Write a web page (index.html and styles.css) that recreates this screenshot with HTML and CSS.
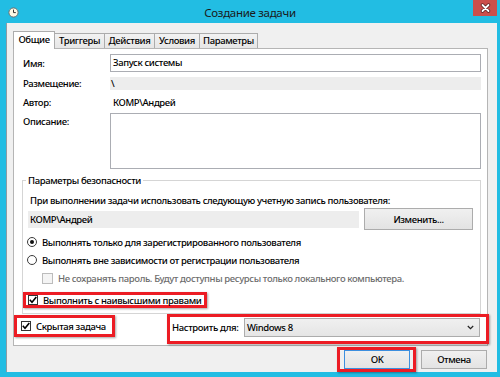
FILE: index.html
```html
<!DOCTYPE html>
<html lang="ru">
  <head>
    <meta charset="utf-8">
    <title>Создание задачи</title>
    <link rel="stylesheet" href="styles.css">
  </head>
  <body>
    <div class="Window">
      <div class="TitleBar">
        <span class="TitleIcon">
          <svg width="11" height="11" viewBox="0 0 11 11">
            <circle cx="5.5" cy="5.5" r="4.6" fill="#fdf8e4" stroke="#6f6f6f" stroke-width="1"/>
            <path d="M5.5 2.6 V5.6 H7.8" fill="none" stroke="#333" stroke-width="1"/>
          </svg>
        </span>
        <span class="TitleText">Создание задачи</span>
        <span class="CloseBtn">
          <svg width="11" height="10" viewBox="0 0 11 10">
            <path d="M2.5 2 L8.5 8 M8.5 2 L2.5 8" stroke="#5a2020" stroke-width="3.4" stroke-linecap="round"/>
            <path d="M2.5 2 L8.5 8 M8.5 2 L2.5 8" stroke="#fff" stroke-width="1.8" stroke-linecap="round"/>
          </svg>
        </span>
      </div>

      <div class="Client">
        <div class="Tabs">
          <span class="Tab Active TabGeneral">Общие</span>
          <span class="Tab TabWide">Триггеры</span>
          <span class="Tab TabWide">Действия</span>
          <span class="Tab TabCond">Условия</span>
          <span class="Tab TabParams">Параметры</span>
        </div>

        <div class="Panel">
          <div class="InfoGrid">
            <span class="Label">Имя:</span>
            <div class="Input">Запуск системы</div>
            <span class="Label Row2">Размещение:</span>
            <div class="ReadOnly Row2">\</div>
            <span class="Label AuthorRow">Автор:</span>
            <span class="Value AuthorRow">КОМР\Андрей</span>
            <span class="Label DescLabel">Описание:</span>
            <div class="TextArea"></div>
          </div>

          <fieldset class="Group">
            <legend>Параметры безопасности</legend>
            <div class="GroupText">При выполнении задачи использовать следующую учетную запись пользователя:</div>
            <div class="AccountRow">
              <div class="AccountField">КОМР\Андрей</div>
              <span class="Button ChangeBtn">Изменить...</span>
            </div>
            <div class="Option FirstOption"><span class="Radio On"></span>Выполнять только для зарегистрированного пользователя</div>
            <div class="Option"><span class="Radio"></span>Выполнять вне зависимости от регистрации пользователя</div>
            <div class="Option SubOption Disabled"><span class="Check Off"></span>Не сохранять пароль. Будут доступны ресурсы только локального компьютера.</div>
            <div class="Mark MarkRun">
              <span class="Check">
                <svg width="8" height="8" viewBox="0 0 8 8"><path d="M0.8 3.8 L3 6.2 L7.3 1" fill="none" stroke="#000" stroke-width="1.6"/></svg>
              </span>Выполнить с наивысшими правами
            </div>
          </fieldset>

          <div class="BottomRow">
            <div class="Mark MarkHidden">
              <span class="Check">
                <svg width="8" height="8" viewBox="0 0 8 8"><path d="M0.8 3.8 L3 6.2 L7.3 1" fill="none" stroke="#000" stroke-width="1.6"/></svg>
              </span>Скрытая задача
            </div>
            <div class="Mark MarkConfig">
              <span class="ConfigLabel">Настроить для:</span>
              <div class="Select">
                <span>Windows 8</span>
                <svg width="7" height="5" viewBox="0 0 7 5"><path d="M0.8 1 L3.5 3.7 L6.2 1" fill="none" stroke="#222" stroke-width="1.2"/></svg>
              </div>
            </div>
          </div>
        </div>

        <div class="Buttons">
          <div class="Mark MarkOk"><span class="Button Default">OK</span></div>
          <span class="Button CancelBtn">Отмена</span>
        </div>
      </div>
    </div>
  </body>
</html>
```

FILE: styles.css
```css
* {
  margin: 0;
  padding: 0;
  box-sizing: border-box;
}

body {
  width: 500px;
  height: 377px;
  overflow: hidden;
  background: #22bde3;
  font-family: "Noto Sans", "Open Sans", sans-serif;
  font-size: 9.5px;
  font-weight: 500;
  letter-spacing: -0.38px;
  color: #000;
}

.Window {
  display: flex;
  flex-direction: column;
  height: 377px;
}

/* title bar */

.TitleBar {
  height: 23px;
  display: grid;
  grid-template-columns: 1fr auto 1fr;
}

.TitleIcon {
  padding: 7px 0 0 8px;
}

.TitleIcon svg {
  display: block;
}

.TitleText {
  padding-top: 2px;
  font-size: 11.5px;
  font-weight: 400;
  letter-spacing: -0.3px;
  line-height: 22px;
  color: #1a1a1a;
}

.CloseBtn {
  justify-self: end;
  width: 24px;
  height: 16px;
  margin-right: 3px;
  background: #cb4f4b;
  display: flex;
  align-items: center;
  justify-content: center;
}

/* dialog body */

.Client {
  flex: 1;
  margin: 0 3px 5px 6px;
  padding: 8px 9px 0 6px;
  background: #f0f0f0;
  border-left: 1px solid #8e9ba3;
}

.Tabs {
  display: flex;
  align-items: flex-end;
  height: 17px;
}

.Tab {
  height: 15px;
  margin-left: -1px;
  border: 1px solid #acacac;
  border-bottom: 0;
  background: linear-gradient(#f2f2f2, #e6e6e6);
  text-align: center;
  line-height: 14px;
}

.Tab.Active {
  position: relative;
  z-index: 1;
  height: 18px;
  margin-left: 0;
  margin-bottom: -1px;
  background: #fff;
  line-height: 16px;
}

.TabGeneral { width: 42px; }
.TabWide { width: 51px; }
.TabCond { width: 46px; }
.TabParams { width: 59px; }

.Panel {
  height: 298px;
  padding: 5px 6px 0 9px;
  background: #fff;
  border: 1px solid #b5b5b5;
}

.InfoGrid {
  display: grid;
  grid-template-columns: 87px 1fr;
}

.Label {
  align-self: center;
  line-height: 13px;
}

.Row2 {
  margin-top: 5px;
}

.Input {
  height: 18px;
  padding-left: 2px;
  border: 1px solid #abadb3;
  line-height: 16px;
}

.ReadOnly {
  height: 13px;
  padding-left: 1px;
  background: #ededed;
  line-height: 13px;
}

.AuthorRow {
  padding: 4px 0 2px;
  line-height: 17px;
}

.Value {
  padding-left: 3px;
}

.DescLabel {
  align-self: start;
  padding-top: 2px;
}

.TextArea {
  height: 56px;
  border: 1px solid #abadb3;
}

/* security group */

.Group {
  margin: 5px 0 0 -1px;
  padding: 0 7px 5px 5px;
  border: 1px solid #d5d5d5;
}

.Group legend {
  margin-left: -2px;
  padding: 0 2px;
  line-height: 13px;
}

.GroupText {
  margin-top: 7px;
  padding-left: 2px;
  line-height: 13px;
}

.AccountRow {
  display: flex;
  align-items: center;
  justify-content: space-between;
  height: 22px;
  margin-top: 1px;
}

.AccountField {
  width: 331px;
  height: 17px;
  padding-left: 2px;
  background: #ededed;
  line-height: 17px;
}

.Button {
  display: flex;
  align-items: center;
  justify-content: center;
  border: 1px solid #acacac;
  background: linear-gradient(#f0f0f0, #e3e3e3);
}

.ChangeBtn {
  width: 109px;
  height: 22px;
}

.Option {
  display: flex;
  align-items: center;
  height: 18px;
}

.FirstOption {
  margin-top: 3px;
}

.SubOption {
  padding-left: 14px;
}

.Disabled {
  color: #6d6d6d;
}

.Radio {
  position: relative;
  width: 10px;
  height: 10px;
  margin: 0 5px 0 -1px;
  border: 1px solid #3a3a3a;
  border-radius: 50%;
  background: #fff;
}

.Radio.On::after {
  content: "";
  position: absolute;
  left: 2px;
  top: 2px;
  width: 4px;
  height: 4px;
  border-radius: 50%;
  background: #111;
}

.Check {
  display: flex;
  align-items: center;
  justify-content: center;
  width: 10px;
  height: 10px;
  margin-right: 5px;
  border: 1px solid #333;
  background: #fff;
}

.Check.Off {
  width: 11px;
  height: 11px;
  border-color: #bcbcbc;
  background: #f4f4f4;
}

/* red highlight frames */

.Mark {
  display: flex;
  align-items: center;
  border: 3px solid #ec1c24;
  box-shadow: 1px 1px 2px rgba(0, 0, 0, 0.35);
}

.MarkRun {
  width: fit-content;
  height: 16px;
  margin: 5px 0 0 -5px;
  padding: 0 3px 0 2px;
}

.BottomRow {
  display: flex;
  align-items: flex-start;
  justify-content: space-between;
}

.MarkHidden {
  height: 22px;
  margin: 1px 0 0 -9px;
  padding: 0 6px 0 4px;
}

.MarkConfig {
  align-items: flex-start;
  width: 322px;
  height: 30px;
  margin-right: -8px;
  padding: 1px 6px 0 2px;
}

.ConfigLabel {
  flex: 1;
  line-height: 19px;
}

.Select {
  display: flex;
  align-items: center;
  justify-content: space-between;
  width: 236px;
  height: 19px;
  padding: 0 5px 0 2px;
  border: 1px solid #acacac;
  background: linear-gradient(#f0f0f0, #e5e5e5);
}

/* dialog buttons */

.Buttons {
  display: flex;
  align-items: flex-start;
  justify-content: flex-end;
  margin-top: 1px;
}

.MarkOk {
  height: 25px;
  padding: 0 3px 0 4px;
  align-items: flex-start;
}

.Default {
  width: 66px;
  height: 19px;
  border-color: #3c8fdf;
}

.CancelBtn {
  width: 66px;
  height: 19px;
  margin: 3px 1px 0 5px;
}
```
